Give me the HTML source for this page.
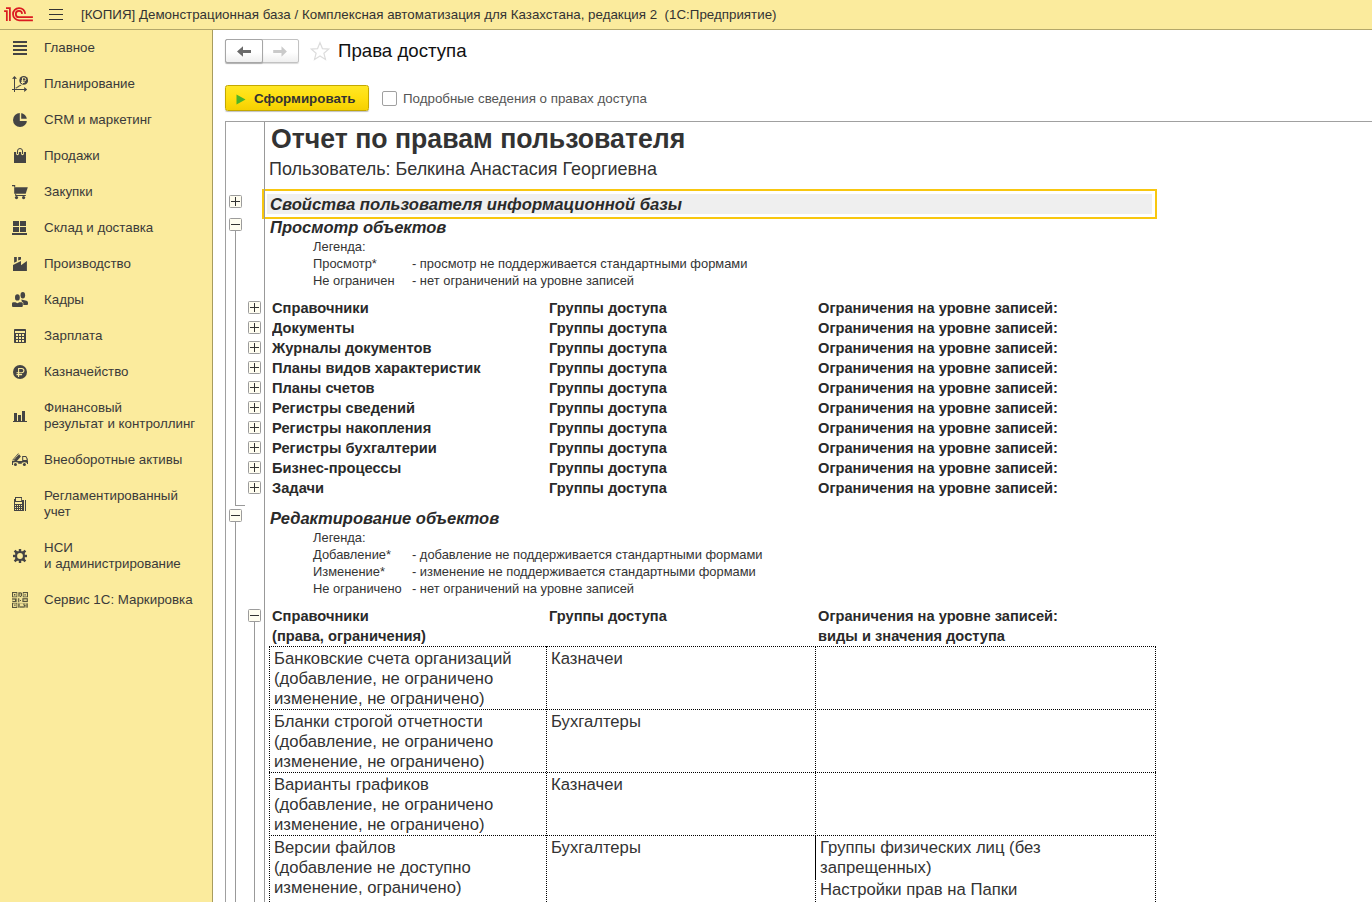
<!DOCTYPE html>
<html><head><meta charset="utf-8"><title>Права доступа</title>
<style>
*{box-sizing:border-box;margin:0;padding:0}
html,body{width:1372px;height:902px;overflow:hidden;background:#fff}
body{font-family:"Liberation Sans",sans-serif;position:relative;color:#333}
.a{position:absolute;white-space:nowrap}
#top{left:0;top:0;width:1372px;height:30px;background:#fbeb9d;border-bottom:1px solid #b3a76a}
#side{left:0;top:30px;width:213px;height:872px;background:#fbeb9d;border-right:1px solid #a89c5e}
.si{left:44px;font-size:13.33px;line-height:16px;color:#3a3a3a}
.ic{left:12px;width:16px;height:16px}
.ic svg{display:block}
.t10{font-size:13.33px}
.h{font-weight:bold;font-size:14.67px;line-height:20px;color:#2a2a2a;transform:scaleY(1.06);transform-origin:0 15px}
.lg{font-size:12.9px;line-height:17px;color:#333}
.c{font-size:16.67px;line-height:20px;color:#333}
.bi{font-weight:bold;font-style:italic;font-size:16.67px;color:#2a2a2a}
.pm{width:13px;height:13px;border:1px solid #9c9c9c;border-radius:1.500px;background:#fffdf0}
.pm:before{content:"";position:absolute;left:1px;top:5px;width:9px;height:1px;background:#333}
.pm.p:after{content:"";position:absolute;left:5px;top:1px;width:1px;height:9px;background:#333}
.vl{width:1px;background:#999}
.hl{height:1px;background:#999}
.dh{height:0;border-top:1px dotted #000}
.dv{width:0;border-left:1px dotted #000}
</style></head><body>

<div class="a" id="top"></div>
<svg class="a" style="left:0;top:0" width="40" height="29" viewBox="0 0 40 29"><g fill="none" stroke="#db1b21" stroke-width="1.750"><path d="M6 8H9.900V21"/><path d="M4.100 11H6.850V21"/><path d="M25.200 13.900A6.100 6.100 0 1 0 19.100 20.250H32.900"/><path d="M22.100 13.900A3.150 3.150 0 1 0 19 17.200H32.900"/></g></svg>
<div class="a" style="left:49px;top:9px;width:14px;height:1px;background:#333"></div>
<div class="a" style="left:49px;top:14px;width:14px;height:1px;background:#333"></div>
<div class="a" style="left:49px;top:19px;width:14px;height:1px;background:#333"></div>
<div class="a t10" style="left:81px;top:7px;line-height:16px;color:#333;white-space:pre;letter-spacing:.010px">[КОПИЯ] Демонстрационная база / Комплексная автоматизация для Казахстана, редакция 2  (1С:Предприятие)</div>
<div class="a" id="side"></div>
<div class="a si" style="top:40px">Главное</div>
<div class="a ic" style="top:40px"><svg width="16" height="16" viewBox="0 0 16 16" fill="#444"><path d="M1 1h14v2H1zM1 5h14v2H1zM1 9h14v2H1zM1 13h14v2H1z"/></svg></div>
<div class="a si" style="top:76px">Планирование</div>
<div class="a ic" style="top:76px"><svg width="16" height="16" viewBox="0 0 16 16" fill="#444"><path d="M2 1h1v15H2zM0 13h13v1H0z"/><path d="M2.500 0L0 2.800h5zM15.200 13.500L12.200 11.100v4.800z"/><path d="M3.600 11.900h1.400v-.9h1.400v-.9h1.300v-.7h1.500" fill="none" stroke="#444" stroke-width=".9"/><circle cx="11.700" cy="4.400" r="4.400"/><g fill="none" stroke="#fbeb9d" stroke-width="1"><path d="M10.500 7.800V1.800h1.700a1.600 1.600 0 0 1 0 3.200H9M9 6.500h3.600"/></g></svg></div>
<div class="a si" style="top:112px">CRM и маркетинг</div>
<div class="a ic" style="top:112px"><svg width="16" height="16" viewBox="0 0 16 16" fill="#444"><circle cx="8" cy="8" r="7"/><path d="M7.800 0h1.400v6.800H16V9H7.800z" fill="#fbeb9d"/></svg></div>
<div class="a si" style="top:148px">Продажи</div>
<div class="a ic" style="top:148px"><svg width="16" height="16" viewBox="0 0 16 16" fill="#444"><path d="M2 4h12v11H2z"/><path d="M5.500 4.500V5.800M10.500 4.500V5.800" fill="none" stroke="#fbeb9d" stroke-width="2.800" stroke-linecap="round"/><path d="M5.500 6V3a2.500 2.500 0 0 1 5 0V6" fill="none" stroke="#444" stroke-width="1"/></svg></div>
<div class="a si" style="top:184px">Закупки</div>
<div class="a ic" style="top:184px"><svg width="16" height="16" viewBox="0 0 16 16" fill="#444"><path d="M0 1h3.200v2.200h-1V2.200H0z"/><path d="M2.200 3.200h13.600l-2.100 6.500H2.200z"/><path d="M3.200 9.700h1v1.400h9.600v.9H3.200z"/><circle cx="4.500" cy="13.600" r="1.600"/><circle cx="11.600" cy="13.600" r="1.600"/></svg></div>
<div class="a si" style="top:220px">Склад и доставка</div>
<div class="a ic" style="top:220px"><svg width="16" height="16" viewBox="0 0 16 16" fill="#444"><path d="M1 1h6v5H1zM8 1h6v5H8zM1 7h6v5H1zM8 7h6v5H8zM0 13h15v2H0z"/><path d="M7 0h1v13H7zM0 6h15v1H0z" fill="#fbeb9d"/></svg></div>
<div class="a si" style="top:256px">Производство</div>
<div class="a ic" style="top:256px"><svg width="16" height="16" viewBox="0 0 16 16" fill="#444"><path d="M1 9L9 5v4.200L14.900 5v9.900H1z"/><path d="M2.100 1h2.700v4.400L2.100 6.800zM6.200 1H9v2.600L6.200 4.600z"/></svg></div>
<div class="a si" style="top:292px">Кадры</div>
<div class="a ic" style="top:292px"><svg width="16" height="16" viewBox="0 0 16 16" fill="#444"><ellipse cx="10.800" cy="3.300" rx="2.300" ry="3.200"/><path d="M9.300 7.500l5.200 1.300q1.500.4 1.500 1.800v1.300q0 1-1 1h-4.200z"/><ellipse cx="5.400" cy="5.400" rx="2.900" ry="3.700" fill="#fbeb9d"/><ellipse cx="5.400" cy="5.400" rx="2.400" ry="3.200"/><path d="M-.5 15.500v-4.500q0-1.300 2-1.300h7.800q2 0 2 1.300v4.500z" fill="#fbeb9d"/><path d="M0 14v-2.500q0-1.300 1.500-1.300h1.900l2 1 2-1h1.900q1.500 0 1.500 1.300V14q0 1-1 1H1q-1 0-1-1z"/></svg></div>
<div class="a si" style="top:328px">Зарплата</div>
<div class="a ic" style="top:328px"><svg width="16" height="16" viewBox="0 0 16 16" fill="#444"><rect x="2" y="1" width="12" height="14" rx=".8"/><g fill="#fbeb9d"><path d="M3 3h10v2H3zM4 6h2v2H4zM7 6h2v2H7zM10 6h2v2h-2zM4 9h2v2H4zM7 9h2v2H7zM10 9h2v2h-2zM4 12h2v2H4zM7 12h2v2H7zM10 12h2v2h-2z"/></g></svg></div>
<div class="a si" style="top:364px">Казначейство</div>
<div class="a ic" style="top:364px"><svg width="16" height="16" viewBox="0 0 16 16" fill="#444"><circle cx="8" cy="8" r="7"/><path d="M6.600 13V4.500h3.200a2.100 2.100 0 0 1 0 4.200H4.500M4.500 10.600h5.600" fill="none" stroke="#fbeb9d" stroke-width="1.100"/></svg></div>
<div class="a si" style="top:400px">Финансовый<br>результат и контроллинг</div>
<div class="a ic" style="top:408px"><svg width="16" height="16" viewBox="0 0 16 16" fill="#444"><path d="M2 5h3v8H2zM6 7h3v6H6zM10 3h3v10h-3zM1 13h14v1H1z"/></svg></div>
<div class="a si" style="top:452px">Внеоборотные активы</div>
<div class="a ic" style="top:452px"><svg width="16" height="16" viewBox="0 0 16 16" fill="#444"><path d="M0.100 8.300L6.300 1.200L8.900 4.500L4.700 9.200z"/><g fill="#fbeb9d"><circle cx="1.700" cy="7.900" r=".5"/><circle cx="2.700" cy="6.800" r=".5"/><circle cx="3.700" cy="5.700" r=".5"/><circle cx="4.700" cy="4.600" r=".5"/><circle cx="5.700" cy="3.500" r=".5"/><circle cx="6.600" cy="2.500" r=".5"/></g><path d="M0 9h16v1.500H0zM0 9h1v4H0zM15 9h1v3h-1zM6.200 10.500h3.600v1.300H6.200z"/><path d="M10.200 4h3.900l1.700 3v3.500h-5.600z"/><path d="M11.200 4.900h2.400l1 2.100v1.100h-3.400z" fill="#fbeb9d"/><circle cx="3.450" cy="12.500" r="2.300" fill="#fbeb9d"/><circle cx="12.400" cy="12.500" r="2.300" fill="#fbeb9d"/><circle cx="3.450" cy="12.500" r="1.500"/><circle cx="12.400" cy="12.500" r="1.500"/></svg></div>
<div class="a si" style="top:488px">Регламентированный<br>учет</div>
<div class="a ic" style="top:496px"><svg width="16" height="16" viewBox="0 0 16 16" fill="#444"><path d="M3 1h7v3h2v11H2V3h1z"/><path d="M13 4h1v11h-1z"/><g fill="#fbeb9d"><path d="M4 2h5.200v2.900H4zM3 6h7v1.900H3zM3 9h1v1H3zM5 9h1v1H5zM7 9h1v1H7zM9 9h1v1H9zM3 11h1v1H3zM5 11h1v1H5zM7 11h1v1H7zM9 11h1v1H9zM3 13h1v1H3zM5 13h1v1H5zM7 13h1v1H7zM9 13h1v1H9z"/></g></svg></div>
<div class="a si" style="top:540px">НСИ<br>и администрирование</div>
<div class="a ic" style="top:548px"><svg width="16" height="16" viewBox="0 0 16 16" fill="#444"><g><rect x="6.800" y="1" width="2.400" height="14"/><rect x="1" y="6.800" width="14" height="2.400"/><rect x="6.800" y=".4" width="2.400" height="15.200" transform="rotate(45 8 8)"/><rect x="6.800" y=".4" width="2.400" height="15.200" transform="rotate(-45 8 8)"/><rect x="3.200" y="3.200" width="9.600" height="9.600" rx="1.500"/></g><circle cx="8" cy="8" r="2.900" fill="#fbeb9d"/></svg></div>
<div class="a si" style="top:592px">Сервис 1С: Маркировка</div>
<div class="a ic" style="top:592px"><svg width="16" height="16" viewBox="0 0 16 16" fill="#444"><g opacity=".78"><rect x="0" y="0" width="16" height="16" fill="#8a8358" opacity=".55"/><g fill="none" stroke="#2a2a22" stroke-width="1"><rect x=".5" y=".5" width="4.500" height="4.500"/><rect x="11" y=".5" width="4.500" height="4.500"/><rect x=".5" y="11" width="4.500" height="4.500"/></g><g fill="#fbeb9d" opacity=".8"><rect x="1.200" y="1.200" width="3" height="3"/><rect x="11.800" y="1.200" width="3" height="3"/><rect x="1.200" y="11.800" width="3" height="3"/><rect x="5.500" y="5.300" width="5" height="1"/><rect x="0" y="5.300" width="16" height=".8"/><rect x="5.300" y="0" width=".8" height="16"/><rect x="10" y="0" width=".8" height="6"/><rect x="0" y="10.200" width="16" height=".8"/><rect x="7.500" y="6" width="2.500" height="4"/><rect x="8" y="12" width="3" height="2"/><rect x="12.500" y="7.500" width="2" height="1"/><rect x="1" y="8" width="2" height="1"/></g><g fill="#2a2a22"><path d="M2 2h1.400v1.400H2zM12.400 2.200h1.400v1.400h-1.400zM2.200 12.400h1.400v1.400H2.200zM6.500 .5h2.500v1H6.500zM6.500 1h1v3.500h-1zM9 1h1v3h-1zM8 4h1v1H8zM0 6.500h4.500v1H0zM.5 9h4v1h-4zM3 7.500h1.500v1.500H3zM6.200 6.200h1v4h-1zM8 8h1v1H8zM10.500 6.300h5v1h-5zM10.500 9h5v1h-5zM10.500 6.300h1v3.700h-1zM14.800 6.300h1v3.700h-1zM6.300 11.500h1.200v4H6.300zM8 14.500h4.500v1H8zM12 13h1.500v1.500H12zM14.500 11.500h1.200v4h-1.200zM11.500 11.500h1v1.500h-1z"/></g></g></svg></div>
<div class="a" style="left:225px;top:39px;width:74px;height:24px;border:1px solid #c2c2c2;border-radius:2px;background:linear-gradient(#fff 0%,#fff 55%,#efefef 100%);box-shadow:0 1px 1px rgba(0,0,0,.15)"></div>
<div class="a" style="left:225px;top:39px;width:38px;height:24px;border:1px solid #a6a6a6;border-radius:2px;box-shadow:0 1px 1px rgba(0,0,0,.2)"></div>
<svg class="a" style="left:236px;top:45px" width="16" height="13" viewBox="0 0 16 13"><path d="M1 6.500L7 1.200V5H15V8H7V11.800z" fill="#6a6a6a"/></svg>
<svg class="a" style="left:272px;top:45px" width="16" height="13" viewBox="0 0 16 13"><path d="M14.900 6.500L9.500 1.200V5H1.200V8H9.500V11.800z" fill="#cacaca"/></svg>
<svg class="a" style="left:310px;top:41px" width="20" height="21" viewBox="0 0 20 21"><path d="M10.00 1.60L12.41 7.58L18.84 8.03L13.90 12.17L15.47 18.42L10.00 15.00L4.53 18.42L6.10 12.17L1.16 8.03L7.59 7.58z" fill="#fff" stroke="#dcdcdc" stroke-width="1.200" stroke-linejoin="miter"/></svg>
<div class="a" style="left:338px;top:39px;font-size:18.67px;line-height:24px;color:#111">Права доступа</div>

<div class="a" style="left:225px;top:85px;width:144px;height:26px;border:1px solid #c4a800;border-radius:2.500px;background:linear-gradient(#ffe725 0%,#ffde0f 50%,#f5d000 100%);box-shadow:0 1px 1px rgba(0,0,0,.25)"></div>
<svg class="a" style="left:236px;top:93.500px" width="10" height="11" viewBox="0 0 10 11"><path d="M0.500 0.500L9.500 5.500L0.500 10.500z" fill="#4cb329"/></svg>
<div class="a" style="left:254px;top:91px;font-size:13.33px;font-weight:bold;line-height:16px;color:#333">Сформировать</div>
<div class="a" style="left:382px;top:91px;width:15px;height:15px;border:1px solid #a0a0a0;border-radius:2px;background:#fff"></div>
<div class="a t10" style="left:403px;top:91px;line-height:16px;color:#555">Подробные сведения о правах доступа</div>

<div class="a hl" style="left:225px;top:121px;width:1147px;background:#a0a0a0"></div>
<div class="a vl" style="left:225px;top:121px;height:781px;background:#a0a0a0"></div>
<div class="a" style="left:271px;top:123px;font-size:26.67px;font-weight:bold;line-height:32px;color:#333;transform:scaleY(1.07);transform-origin:0 25px">Отчет по правам пользователя</div>
<div class="a" style="left:269px;top:158px;font-size:17.970px;line-height:22px;color:#333">Пользователь: Белкина Анастасия Георгиевна</div>
<div class="a" style="left:262px;top:189px;width:895px;height:30px;border:2px solid #f8c70f;background:#fff"></div>
<div class="a" style="left:267px;top:194px;width:885px;height:20px;background:#efefef"></div>
<div class="a bi" style="left:270px;top:195px;line-height:20px">Свойства пользователя информационной базы</div>
<div class="a bi" style="left:270px;top:218px;line-height:20px;font-size:16.550px">Просмотр объектов</div>
<div class="a lg" style="left:313px;top:238px">Легенда:</div>
<div class="a lg" style="left:313px;top:255px">Просмотр*</div>
<div class="a lg" style="left:412px;top:255px">- просмотр не поддерживается стандартными формами</div>
<div class="a lg" style="left:313px;top:272px">Не ограничен</div>
<div class="a lg" style="left:412px;top:272px">- нет ограничений на уровне записей</div>
<div class="a h" style="left:272px;top:298px">Справочники</div>
<div class="a h" style="left:549px;top:298px">Группы доступа</div>
<div class="a h" style="left:818px;top:298px">Ограничения на уровне записей:</div>
<div class="a pm p" style="left:248px;top:301px"></div>
<div class="a h" style="left:272px;top:318px">Документы</div>
<div class="a h" style="left:549px;top:318px">Группы доступа</div>
<div class="a h" style="left:818px;top:318px">Ограничения на уровне записей:</div>
<div class="a pm p" style="left:248px;top:321px"></div>
<div class="a h" style="left:272px;top:338px">Журналы документов</div>
<div class="a h" style="left:549px;top:338px">Группы доступа</div>
<div class="a h" style="left:818px;top:338px">Ограничения на уровне записей:</div>
<div class="a pm p" style="left:248px;top:341px"></div>
<div class="a h" style="left:272px;top:358px">Планы видов характеристик</div>
<div class="a h" style="left:549px;top:358px">Группы доступа</div>
<div class="a h" style="left:818px;top:358px">Ограничения на уровне записей:</div>
<div class="a pm p" style="left:248px;top:361px"></div>
<div class="a h" style="left:272px;top:378px">Планы счетов</div>
<div class="a h" style="left:549px;top:378px">Группы доступа</div>
<div class="a h" style="left:818px;top:378px">Ограничения на уровне записей:</div>
<div class="a pm p" style="left:248px;top:381px"></div>
<div class="a h" style="left:272px;top:398px">Регистры сведений</div>
<div class="a h" style="left:549px;top:398px">Группы доступа</div>
<div class="a h" style="left:818px;top:398px">Ограничения на уровне записей:</div>
<div class="a pm p" style="left:248px;top:401px"></div>
<div class="a h" style="left:272px;top:418px">Регистры накопления</div>
<div class="a h" style="left:549px;top:418px">Группы доступа</div>
<div class="a h" style="left:818px;top:418px">Ограничения на уровне записей:</div>
<div class="a pm p" style="left:248px;top:421px"></div>
<div class="a h" style="left:272px;top:438px">Регистры бухгалтерии</div>
<div class="a h" style="left:549px;top:438px">Группы доступа</div>
<div class="a h" style="left:818px;top:438px">Ограничения на уровне записей:</div>
<div class="a pm p" style="left:248px;top:441px"></div>
<div class="a h" style="left:272px;top:458px">Бизнес-процессы</div>
<div class="a h" style="left:549px;top:458px">Группы доступа</div>
<div class="a h" style="left:818px;top:458px">Ограничения на уровне записей:</div>
<div class="a pm p" style="left:248px;top:461px"></div>
<div class="a h" style="left:272px;top:478px">Задачи</div>
<div class="a h" style="left:549px;top:478px">Группы доступа</div>
<div class="a h" style="left:818px;top:478px">Ограничения на уровне записей:</div>
<div class="a pm p" style="left:248px;top:481px"></div>
<div class="a bi" style="left:270px;top:509px;line-height:20px;font-size:16.550px">Редактирование объектов</div>
<div class="a lg" style="left:313px;top:529px">Легенда:</div>
<div class="a lg" style="left:313px;top:546px">Добавление*</div>
<div class="a lg" style="left:412px;top:546px">- добавление не поддерживается стандартными формами</div>
<div class="a lg" style="left:313px;top:563px">Изменение*</div>
<div class="a lg" style="left:412px;top:563px">- изменение не поддерживается стандартными формами</div>
<div class="a lg" style="left:313px;top:580px">Не ограничено</div>
<div class="a lg" style="left:412px;top:580px">- нет ограничений на уровне записей</div>
<div class="a h" style="left:272px;top:606px">Справочники</div>
<div class="a h" style="left:272px;top:626px">(права, ограничения)</div>
<div class="a h" style="left:549px;top:606px">Группы доступа</div>
<div class="a h" style="left:818px;top:606px">Ограничения на уровне записей:</div>
<div class="a h" style="left:818px;top:626px">виды и значения доступа</div>
<div class="a dh" style="left:269px;top:646px;width:887px"></div>
<div class="a c" style="left:274px;top:649px">Банковские счета организаций<br>(добавление, не ограничено<br>изменение, не ограничено)</div>
<div class="a c" style="left:551px;top:649px">Казначеи</div>
<div class="a dh" style="left:269px;top:709px;width:887px"></div>
<div class="a c" style="left:274px;top:712px">Бланки строгой отчетности<br>(добавление, не ограничено<br>изменение, не ограничено)</div>
<div class="a c" style="left:551px;top:712px">Бухгалтеры</div>
<div class="a dh" style="left:269px;top:772px;width:887px"></div>
<div class="a c" style="left:274px;top:775px">Варианты графиков<br>(добавление, не ограничено<br>изменение, не ограничено)</div>
<div class="a c" style="left:551px;top:775px">Казначеи</div>
<div class="a dh" style="left:269px;top:835px;width:887px"></div>
<div class="a c" style="left:274px;top:838px">Версии файлов<br>(добавление не доступно<br>изменение, ограничено)</div>
<div class="a c" style="left:551px;top:838px">Бухгалтеры</div>
<div class="a c" style="left:820px;top:838px">Группы физических лиц (без<br>запрещенных)</div>
<div class="a c" style="left:820px;top:880px">Настройки прав на Папки</div>
<div class="a dv" style="left:269px;top:646px;height:256px"></div>
<div class="a dv" style="left:546px;top:646px;height:256px"></div>
<div class="a dv" style="left:815px;top:646px;height:256px"></div>
<div class="a dv" style="left:1155px;top:646px;height:256px"></div>
<div class="a" style="left:815px;top:836px;width:1px;height:44px;background:#000"></div>
<div class="a pm p" style="left:229px;top:195px"></div>
<div class="a pm" style="left:229px;top:218px"></div>
<div class="a vl" style="left:235px;top:231px;height:275px"></div>
<div class="a hl" style="left:235px;top:505px;width:10px"></div>
<div class="a pm" style="left:229px;top:509px"></div>
<div class="a vl" style="left:235px;top:522px;height:380px"></div>
<div class="a pm" style="left:248px;top:609px"></div>
<div class="a vl" style="left:254px;top:622px;height:280px"></div>
<div class="a vl" style="left:264px;top:122px;height:780px"></div>
</body></html>
